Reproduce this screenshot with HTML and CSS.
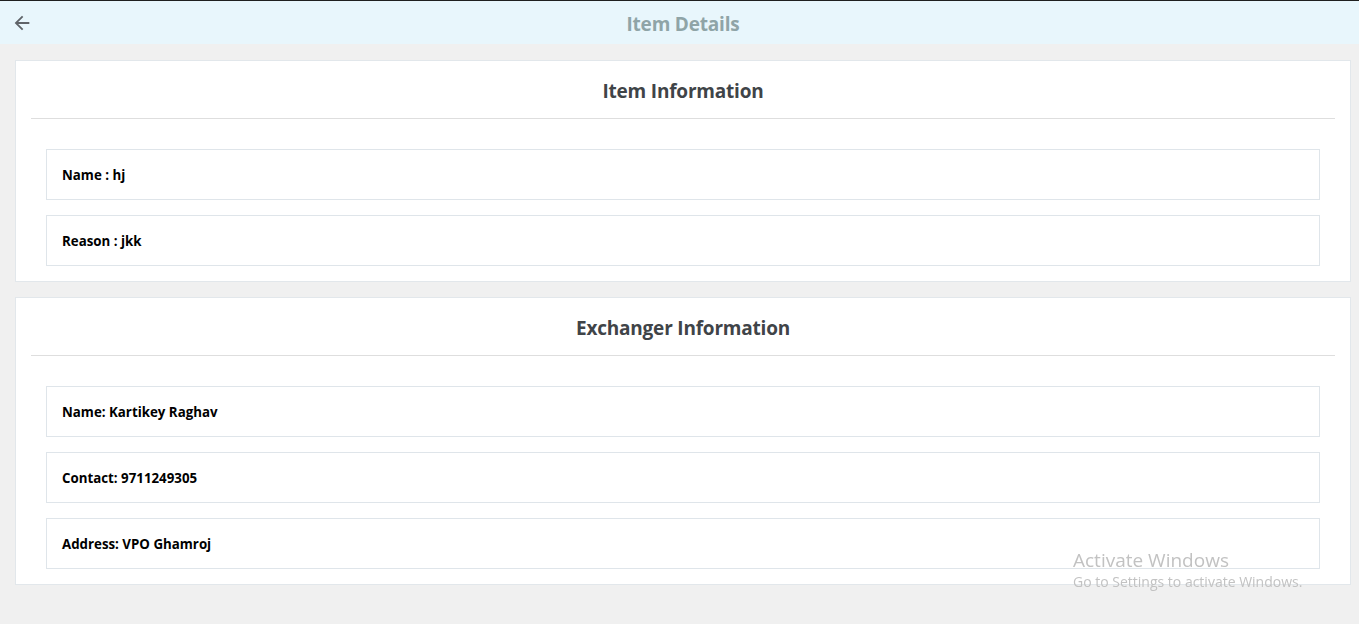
FILE: index.html
```html
<!DOCTYPE html>
<html>
<head>
<meta charset="utf-8">
<link rel="stylesheet" href="styles.css">
</head>
<body>
<div class="page">
  <header class="topbar">
    <button class="back" aria-label="Back">
      <svg width="22" height="22" viewBox="0 0 24 24"><path d="M20 11H7.83l5.59-5.59L12 4l-8 8 8 8 1.41-1.41L7.83 13H20v-2z" fill="#5f6368"/></svg>
    </button>
    <h1 class="topbar-title">Item Details</h1>
  </header>
  <main class="content">
    <section class="card">
      <h2 class="card-title">Item Information</h2>
      <div class="card-body">
        <div class="row">Name : hj</div>
        <div class="row">Reason : jkk</div>
      </div>
    </section>
    <section class="card">
      <h2 class="card-title">Exchanger Information</h2>
      <div class="card-body">
        <div class="row">Name: Kartikey Raghav</div>
        <div class="row">Contact: 9711249305</div>
        <div class="row">Address: VPO Ghamroj</div>
      </div>
    </section>
  </main>
</div>
<div class="watermark">
  <div class="wm-title">Activate Windows</div>
  <div class="wm-sub">Go to Settings to activate Windows.</div>
</div>
</body>
</html>
```
FILE: styles.css
```css
html, body {
  margin: 0;
  padding: 0;
  overflow: hidden;
  background: #f0f0f0;
}
body {
  font-family: "Open Sans", "Noto Sans", sans-serif;
  width: 1366px;
  height: 624px;
}
.page {
  border-top: 1px solid #1f1f1f;
}
.topbar {
  height: 43px;
  background: #e8f6fc;
  display: flex;
  align-items: center;
  justify-content: center;
  position: relative;
}
.back {
  position: absolute;
  left: 11px;
  top: 11px;
  width: 22px;
  height: 22px;
  padding: 0;
  border: 0;
  background: none;
  display: flex;
}
.topbar-title {
  margin: 0;
  padding-top: 3px;
  font-size: 19px;
  font-weight: 700;
  color: #8fa4a7;
  letter-spacing: -0.2px;
}
.content {
  padding: 16px 15px 0;
  display: flex;
  flex-direction: column;
  gap: 15px;
}
.card {
  background: #fff;
  border: 1px solid #e2e7eb;
}
.card-title {
  margin: 0 15px;
  height: 58px;
  padding-top: 3px;
  box-sizing: border-box;
  display: flex;
  align-items: center;
  justify-content: center;
  font-size: 19px;
  font-weight: 700;
  color: #3f4448;
  letter-spacing: -0.2px;
  border-bottom: 1px solid #dedede;
}
.card-body {
  padding: 30px 30px 15px;
  display: flex;
  flex-direction: column;
  gap: 15px;
}
.row {
  height: 48px;
  border: 1px solid #dfe5ea;
  padding-left: 15px;
  padding-top: 1px;
  display: flex;
  align-items: center;
  font-size: 13.3px;
  font-weight: 700;
  color: #000;
}
.watermark {
  position: fixed;
  left: 1073px;
  top: 548px;
  color: #c2c2c2;
  font-family: "Open Sans", "Noto Sans", sans-serif;
}
.wm-title {
  font-size: 19px;
  line-height: 24px;
}
.wm-sub {
  font-size: 14px;
  line-height: 20px;
}
```
